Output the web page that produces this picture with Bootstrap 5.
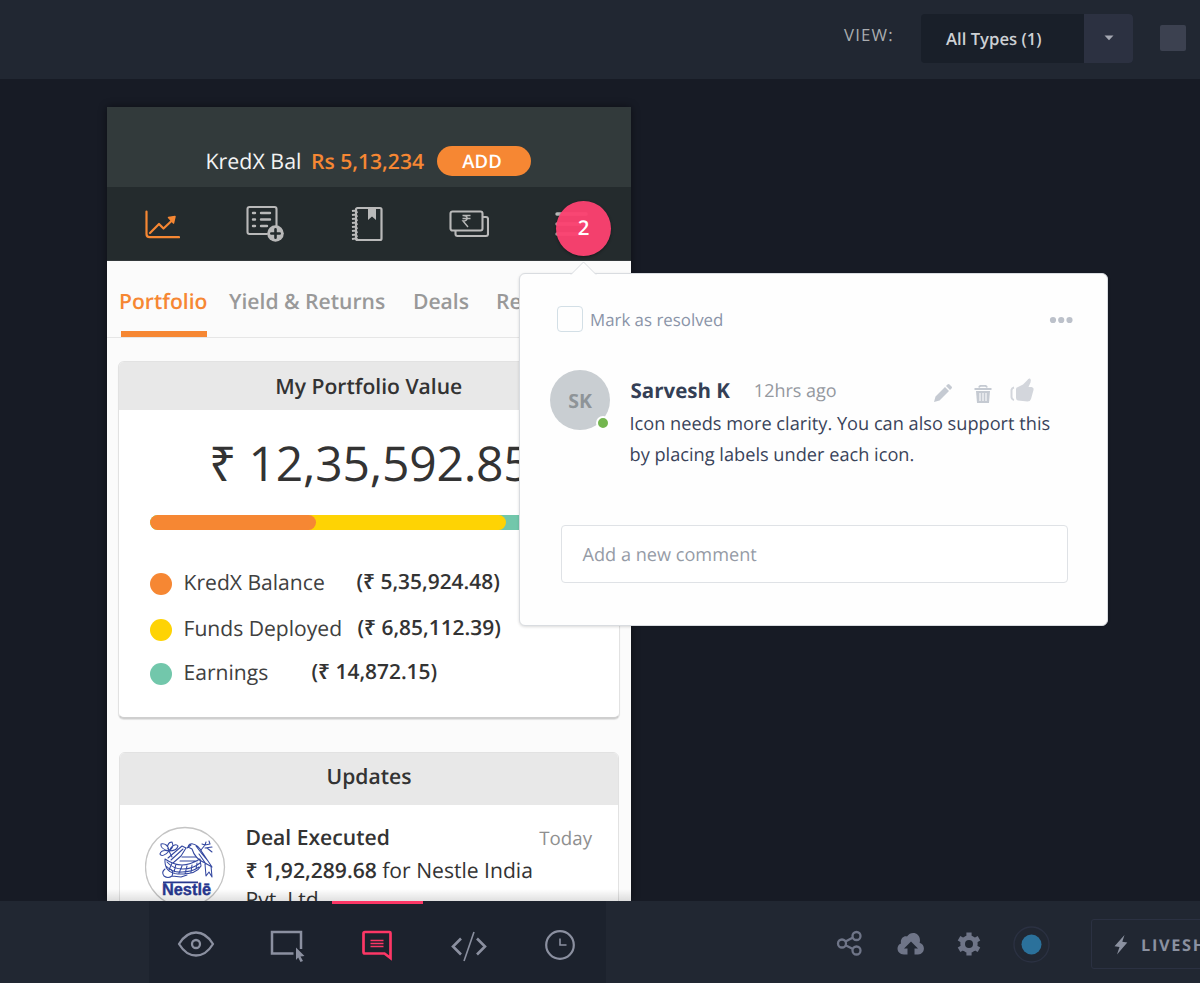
<!DOCTYPE html>
<html lang="en">
<head>
<meta charset="utf-8">
<meta name="viewport" content="width=device-width, initial-scale=1">
<title>Design review</title>
<link href="https://cdn.jsdelivr.net/npm/bootstrap@5.3.0/dist/css/bootstrap.min.css" rel="stylesheet">
<style>
  body{font-family:"Open Sans","Noto Sans",sans-serif;background:#171b25;height:983px;color:#333;text-rendering:geometricPrecision}
  svg{display:block;flex:none}
  .topbar{height:79px;background:#212732}
  .view-label{font-size:16.8px;letter-spacing:1.2px;line-height:70px;color:#aaadb0;width:77px;margin-left:844px}
  .type-select{height:49px;width:212px;margin-top:13.5px;border-radius:4px;overflow:hidden;font-weight:600;font-size:16.7px;line-height:49px;color:#cdd0d4;background:#191f29}
  .type-select .pick{width:163px;padding-left:25px}
  .type-select .drop{background:#2c3141}
  .swatch{width:26px;height:26px;background:#3c4150;margin:25px 0 0 27px;border-radius:2px}
  .stage{height:822px;padding:28px 0 0 107px}
  .phone{width:524px;height:794px;background:#fbfbfb;box-shadow:0 0 8px rgba(0,0,0,.45)}
  .phone-head{height:80px;background:#323a3b;padding:39px 0 0 98.5px;font-size:21.4px;line-height:31px;color:#f4f4f4}
  .amount{font-weight:600;font-size:21.1px;color:#f68733;margin-left:9.5px}
  .add-pill{width:94px;height:30px;border-radius:15px;background:#f68733;color:#fff;font-weight:600;font-size:18.5px;margin-left:12.5px;padding-right:3px}
  .phone-nav{height:74px;background:#242b2d;padding:0 6px 0 3px;border-bottom:1px solid #33393b}
  .tab-row{height:77px;display:grid;grid-template-columns:110px 184px 83px 80px;padding-left:12px;border-bottom:1px solid #e6e6e6;font-weight:600;font-size:21.1px;line-height:82px;color:#999;white-space:nowrap}
  .tab-row .on{color:#f68733;position:relative}
  .tab-row .on::after{content:"";position:absolute;left:2px;top:70px;width:86px;height:6px;background:#f68733}
  .panel{margin-left:11px;width:501.5px;border:1px solid #e2e2e2;border-radius:6px;background:#fff;overflow:hidden}
  .panel-title{background:#e8e8e8;font-weight:600;font-size:21.1px;line-height:49px;height:48px;text-align:center}
  .value-panel{margin-top:23px;height:358px;border-bottom:2px solid #cfcfcf;box-shadow:0 1px 1px rgba(0,0,0,.1)}
  .total{font-size:48px;line-height:107px;height:105px;padding-left:90px;white-space:nowrap;letter-spacing:-.2px}
  .meter{margin-left:31px;width:438px;height:15px;border-radius:8px;background:#72c7ab;overflow:hidden}
  .meter div{height:15px;border-radius:8px}
  .legend{margin:28.5px 0 0 31px;font-size:21.1px;color:#404040}
  .legend b{font-weight:600;font-size:20.9px;color:#333}
  .legend .fund{height:46px}
  .legend span,.legend b{position:relative;top:1.6px}
  .legend .dot{top:0}
  .dot{width:22px;height:22px;border-radius:50%;margin:4px 11.5px 0 0}
  .updates-panel{margin-top:33px;margin-left:12px;width:500px;height:200px}
  .updates-panel .panel-title{height:51.5px;line-height:47px}
  .deal{padding:16px 26px 0 25px;font-size:21.1px}
  .deal .txt{margin-left:18.5px;width:320px;line-height:33px;white-space:nowrap}
  .deal .txt .tail{line-height:25px}
  .deal b{font-weight:600}
  .deal .day{font-size:18.7px;color:#8f8f8f;line-height:35px}
  .fade-edge{position:absolute;left:107px;top:889px;width:524px;height:12px;background:linear-gradient(rgba(0,0,0,0),rgba(0,0,0,.12))}
  .pin{position:absolute;left:556px;top:201px;width:55px;height:55px;border-radius:50%;background:rgba(252,66,112,.96);color:#fff;font-weight:600;font-size:20.4px;line-height:53px;text-align:center;box-shadow:0 1px 3px rgba(0,0,0,.4)}
  .bubble{position:absolute;left:519px;top:273px;width:588.5px;height:353px;border-radius:6px;background:#fefefe;border:1px solid #d9dce0;box-shadow:0 1px 3px rgba(0,0,0,.15);padding:31.5px 34px 0 37px}
  .caret{position:absolute;left:50px;top:-13px}
  .tick{width:26px;height:26px;border:1.5px solid #d3dfe6;border-radius:4px}
  .resolve{font-size:16.85px;color:#8a94a8;margin-left:7px;line-height:27px}
  .face{width:60px;height:60px;border-radius:50%;background:#c9ced2;color:#8e9498;font-weight:700;font-size:19.5px;line-height:61px;text-align:center;position:relative;flex:none}
  .face i{position:absolute;right:0;bottom:0;width:14px;height:14px;border-radius:50%;border:2.5px solid #fff;background:#74b64f}
  .who{font-weight:700;font-size:20.5px;color:#343f55;line-height:42px}
  .when{font-size:18px;color:#94989e;line-height:43px;margin-left:24px}
  .said{font-size:18.2px;line-height:30.5px;color:#39435a;white-space:nowrap;margin:1px 0 -1px -1px}
  .reply{margin:56px 0 0 4px;width:507px;height:58px;border:1.3px solid #dfe2e6;border-radius:4px;padding-left:20.5px;font-size:18.15px;line-height:58px;color:#959ba6;background:#fff}
  .bottombar{height:82px;background:#212732;white-space:nowrap}
  .tools{width:457.5px;margin-left:148.5px;background:#1c222d}
  .tool{width:91.5px;height:82px}
  .tool.on{border-top:3px solid #fc3766;padding-bottom:3px}
  .live{width:150px;height:50px;margin:18px 0 0 41px;border:1.5px solid #2b3142;border-radius:3px;color:#8b91a0;font-weight:700;font-size:16.3px;letter-spacing:1.7px;line-height:50px}
</style>
</head>
<body class="overflow-hidden d-flex flex-column position-relative">

<header class="topbar d-flex flex-shrink-0">
  <div class="view-label">VIEW:</div>
  <div class="type-select d-flex flex-shrink-0">
    <div class="pick">All Types (1)</div>
    <div class="drop flex-fill d-flex align-items-center justify-content-center"><svg width="10" height="6"><path d="M.5.5h9L5 5.3z" fill="#a5a8b2"/></svg></div>
  </div>
  <div class="swatch flex-shrink-0"></div>
</header>

<main class="stage flex-shrink-0 overflow-hidden">
  <div class="phone overflow-hidden">
    <div class="phone-head d-flex align-items-start">
      <span>KredX Bal</span><span class="amount">Rs 5,13,234</span>
      <span class="add-pill d-flex align-items-center justify-content-center">ADD</span>
    </div>
    <nav class="phone-nav d-flex">
      <div class="col d-flex align-items-center justify-content-center"><svg width="36" height="32" viewBox="0 0 36 32" fill="none" stroke="#f68733" stroke-width="2.2" stroke-linecap="round" stroke-linejoin="round"><path d="M2.5 3.500v22.500q0 3.200 3.200 3.200H35M6 25l9-9 4.500 4.500L28.500 12"/><path d="M24.500 9.500l6.500-1-1.500 6.500z" fill="#f68733" stroke-width="1.500"/></svg></div>
      <div class="col d-flex align-items-center justify-content-center"><svg width="38" height="37" viewBox="0 0 38 37" fill="none" stroke="#b9b9b9" stroke-width="2.100" stroke-linecap="round"><path d="M21 29H3.500Q1.500 29 1.500 27V4q0-2 2-2h25q2 0 2 2v17"/><path d="M7 8h2M7 14.500h2M7 21h2M15 8h9M15 14.500h9M15 21h6" stroke-width="2.400"/><circle cx="29.500" cy="28.500" r="8.300" fill="#b9b9b9" stroke="none"/><path d="M29.500 24.300v8.400M25.300 28.500h8.400" stroke="#242b2d" stroke-width="2.600"/></svg></div>
      <div class="col d-flex align-items-center justify-content-center"><svg width="34" height="36" viewBox="0 0 34 36" fill="none" stroke="#b9b9b9" stroke-width="2.200" style="margin-right:2px"><rect x="6" y="2" width="25.500" height="32" rx="1.500"/><path d="M18 2h8v12l-4-3.500-4 3.500z" fill="#b9b9b9" stroke="none"/><path d="M2 5q5-1 5 2M2 9q5-1 5 2M2 13q5-1 5 2M2 17q5-1 5 2M2 21q5-1 5 2M2 25q5-1 5 2M2 29q5-1 5 2M2 33q5-1 5 0" stroke-width="1.800"/></svg></div>
      <div class="col d-flex align-items-center justify-content-center"><svg width="40" height="28" viewBox="0 0 40 28" fill="none" stroke="#b9b9b9" stroke-width="2.100" style="margin-right:3px"><rect x="1.500" y="1.500" width="32" height="19" rx="2"/><path d="M6.500 20.500v3.500q0 2 2 2H37q2 0 2-2V9q0-2-2-2h-3"/><path d="M13.500 5.500h8M13.500 8.500h8M14 5.500c5.500 0 5.500 5.500 0 5.500l5 6" stroke-width="1.400"/></svg></div>
      <div class="col d-flex align-items-center justify-content-center"><svg width="34" height="24" stroke="#b9b9b9" stroke-width="3.400" stroke-linecap="round" style="margin-right:3px"><path d="M2 2h29M2 12h29M2 22h29"/></svg></div>
    </nav>
    <div class="tab-row"><span class="on">Portfolio</span><span>Yield &amp; Returns</span><span>Deals</span><span>Re</span></div>

    <section class="panel value-panel">
      <div class="panel-title">My Portfolio Value</div>
      <div class="total">₹ 12,35,592.85</div>
      <div class="meter"><div style="width:356px;background:#fed304"><div style="width:166px;background:#f68733"></div></div></div>
      <div class="legend">
        <div class="fund d-flex align-items-center"><span class="dot" style="background:#f68733"></span><span style="width:173px">KredX Balance</span><b>(₹ 5,35,924.48)</b></div>
        <div class="fund d-flex align-items-center"><span class="dot" style="background:#fed304"></span><span style="width:174px">Funds Deployed</span><b>(₹ 6,85,112.39)</b></div>
        <div class="d-flex align-items-center" style="height:42px"><span class="dot" style="background:#72c7ab"></span><span style="width:128px">Earnings</span><b>(₹ 14,872.15)</b></div>
      </div>
    </section>

    <section class="panel updates-panel">
      <div class="panel-title">Updates</div>
      <div class="deal d-flex">
        <svg width="82" height="82" viewBox="0 0 82 82" style="margin-top:5.500px">
          <circle cx="40" cy="41" r="39.500" fill="#fff" stroke="#c4c4c4" stroke-width="1.300"/>
          <g fill="none" stroke="#3347a0" stroke-width="1.050" stroke-linecap="round" stroke-linejoin="round">
            <path d="M24 25c-4-1-9-3-8-7 4-1 8 2 8 7zc-3-4-1-9 3-9 2 4 0 7-3 9zc2-5 7-8 9-5-1 4-5 5-9 5zM24 25c-3 4-8 6-9 3 1-4 5-4 9-3zM24 25l3 6"/>
            <path d="M23 32l14-12 4 2-5 8-8 7M26 34l12-11"/>
            <path d="M20 33q-1 14 13 15 18 1 23-8l-1-7q-10 6-18 6T20 33zM22 36q6 7 16 7t17-6M21 40q7 7 16 6 10 0 17-5M24 44l3-7M29 46l2-8M34 47l3-7M40 48l2-8M46 46l1-7M51 43l1-6M37 31h14M35 35h17"/>
            <path d="M20 43q-4 3-1 7 4 3 8 0l9 1 6-2M27 50q2-5-2-7"/>
            <path d="M43 21q1-4 5-3 5 1 9 8l10 15-7-4q-10-4-13-14zM46 19l-4 3M51 20q5 7 12 15M54 28l7 10M60 38l1 12 3-4 3 5-1-11"/>
            <path d="M56 24l4-5-3-1M60 19l1-3M60 19l5-1-1-3M60 22l7-1M62 22l5 4"/>
          </g>
          <path d="M18 56.400h35" stroke="#27378f" stroke-width="1.700"/>
          <text x="17" y="68.500" textLength="49" lengthAdjust="spacingAndGlyphs" font-family="Liberation Sans, sans-serif" font-weight="700" font-size="16.800" fill="#27378f" stroke="#27378f" stroke-width=".4">Nestlē</text>
        </svg>
        <div class="txt"><b>Deal Executed</b><br><b>₹ 1,92,289.68</b> for Nestle India<div class="tail">Pvt. Ltd.</div></div>
        <div class="day ms-auto">Today</div>
      </div>
    </section>
  </div>
  <div class="fade-edge"></div>
</main>

<footer class="bottombar d-flex flex-shrink-0">
  <div class="tools d-flex flex-shrink-0">
    <div class="tool d-flex align-items-center justify-content-center"><svg width="38" height="28" viewBox="0 0 38 28" fill="none" stroke="#8b90a0" stroke-width="2.300" style="margin:4px 0 0 4px"><path d="M2 14Q9 2.500 19 2.500T36 14Q29 25.500 19 25.500T2 14z" stroke-linejoin="round"/><circle cx="19" cy="14" r="4"/></svg></div>
    <div class="tool d-flex align-items-center justify-content-center"><svg width="36" height="34" viewBox="0 0 36 34" style="margin:8px 0 0 4px"><path d="M23.500 24.500H2V3h29v17" fill="none" stroke="#8b90a0" stroke-width="2.500"/><path d="M26 18.500l8.500 8.500-4 .5 2.500 4.500-2.500 1-2.300-4.500-2.200 2.500z" fill="#8b90a0"/></svg></div>
    <div class="tool on d-flex align-items-center justify-content-center"><svg width="32" height="32" viewBox="0 0 32 32" fill="none" stroke="#fc3766" stroke-width="2.700" style="margin-top:6px"><path d="M29.500 26V4q0-1-1-1H4Q2.500 3 2.500 4.500v18.500Q2.500 24.500 4 24.500h19.500l6 4.500z"/><path d="M9.500 11.500h13M9.500 14.500h13M9.500 17.500h13" stroke-width="1.400"/></svg></div>
    <div class="tool d-flex align-items-center justify-content-center"><svg width="38" height="32" viewBox="0 0 38 32" fill="none" stroke="#8b90a0" stroke-width="2.600" style="margin-top:8px"><path d="M11 8.500L3 16.500l8 8M27 8.500l8 8-8 8"/><path d="M24 2L14 31" stroke-width="1.600"/></svg></div>
    <div class="tool d-flex align-items-center justify-content-center"><svg width="32" height="32" viewBox="0 0 32 32" fill="none" stroke="#8b90a0" stroke-width="2.200" style="margin-top:6px"><circle cx="16" cy="16" r="13.800"/><path d="M16 9.500v6.500h6.500" stroke-width="1.600"/></svg></div>
  </div>
  <div class="d-flex align-items-start flex-shrink-0" style="padding-left:230px">
    <svg width="27" height="28" viewBox="0 0 27 28" fill="none" stroke="#6f7588" stroke-width="2.300" style="margin-top:28px"><circle cx="6" cy="14.500" r="4"/><circle cx="20.500" cy="7" r="4"/><circle cx="20.500" cy="21.500" r="4"/><path d="M9.500 12.500l7.500-4M9.500 16.300l7.500 3.700"/></svg>
    <svg width="28" height="24" viewBox="0 0 28 24" style="margin:31px 0 0 34px"><path d="M7 22.500C-.5 22.500-1.500 13.500 4 11.500 3 7 6.500 3.500 10 4.500 14-1.500 23 .5 23 8.500c0 1-.2 1.600-.4 2.200 6.500 2 5.400 11.800-1.600 11.800H17.500V16.500H21L14 9.500l-7 7h3.500v6z" fill="#6f7588"/></svg>
    <svg width="24" height="24" viewBox="-12 -12 24 24" style="margin:31px 0 0 31.500px" fill="#6f7588"><rect x="-2.600" y="-11.500" width="5.200" height="23"/><rect x="-2.600" y="-11.500" width="5.200" height="23" transform="rotate(60)"/><rect x="-2.600" y="-11.500" width="5.200" height="23" transform="rotate(120)"/><circle r="8.700"/><circle r="4" fill="#212732"/></svg>
    <svg width="37" height="37" viewBox="0 0 37 37" style="margin:25px 0 0 32.500px"><circle cx="18.500" cy="18.500" r="17.500" fill="none" stroke="#2b3142" stroke-width="1.400"/><circle cx="18.500" cy="18.500" r="10" fill="#2b719b"/></svg>
    <div class="live d-flex"><svg width="14" height="20" viewBox="0 0 14 20" style="margin:15px 13px 0 22px"><path d="M10.500 0L.5 11.200l5 .8L3 19.500l10.300-12-5-.8z" fill="#8b91a0"/></svg>LIVESH</div>
  </div>
</footer>

<div class="pin">2</div>
<aside class="bubble">
  <svg class="caret" width="28" height="14" viewBox="0 0 28 14"><path d="M1 13.500L13.500 1 26 13.500" fill="#fefefe" stroke="#d9dce0"/></svg>
  <div class="d-flex align-items-start" style="height:26px">
    <span class="tick"></span><span class="resolve">Mark as resolved</span>
    <svg class="ms-auto" width="24" height="8" fill="#bcc1ca" style="margin-top:10px"><circle cx="4" cy="4" r="3.100"/><circle cx="12.200" cy="4" r="3.100"/><circle cx="20.500" cy="4" r="3.100"/></svg>
  </div>
  <div class="d-flex" style="margin:38.500px 0 0 -7px">
    <div class="face">SK<i></i></div>
    <div style="margin-left:20.500px">
      <div class="d-flex align-items-start" style="height:38px"><span class="who">Sarvesh K</span><span class="when">12hrs ago</span>
        <svg width="18" height="18" viewBox="0 0 18 18" fill="#c5cad2" style="margin:14px 0 0 97px"><path d="M0 18l1.500-5.500L11 3l4 4-9.500 9.500zM12 2l1.500-1.500q1-1 2 0l2 2q1 1 0 2L16 6z"/></svg>
        <svg width="18" height="18" viewBox="0 0 18 18" style="margin:14.500px 0 0 22.500px"><path d="M5 2.500Q5.500.8 7 .8h4q1.500 0 2 1.700M.5 4h17" fill="none" stroke="#c5cad2" stroke-width="1.800"/><path d="M2 6h14l-1 12H3z" fill="#c5cad2"/><path d="M6 8v8M9 8v8M12 8v8" stroke="#fefefe" stroke-width="1.100"/></svg>
        <svg width="24" height="25" viewBox="0 0 24 25" fill="#d3d6dc" style="margin:8px 0 0 18px"><path d="M4 9.500Q1.800 10 1.500 12v7q.3 2.500 2.500 3" fill="none" stroke="#d3d6dc" stroke-width="2"/><path d="M6 11q0-1.500 2-2l5-2.500 4-4Q18.500 0 20 .5q1.500 1 .5 4L18.500 9h3Q24 9.500 23.500 12L21 21q-.8 2.500-3.500 2.500L8 22.500q-2-.5-2-2.500z"/></svg>
      </div>
      <div class="said">Icon needs more clarity. You can also support this<br>by placing labels under each icon.</div>
    </div>
  </div>
  <div class="reply">Add a new comment</div>
</aside>
<script src="https://cdn.jsdelivr.net/npm/bootstrap@5.3.0/dist/js/bootstrap.bundle.min.js"></script>
</body>
</html>
